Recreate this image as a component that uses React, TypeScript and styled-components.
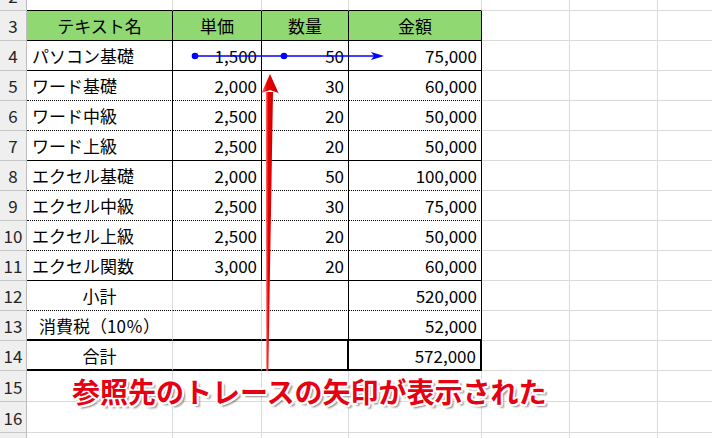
import React from "react";
import styled, { createGlobalStyle, css } from "styled-components";

const Global = createGlobalStyle`
  html, body { margin: 0; padding: 0; background: #fff; }
  body { overflow: hidden; }
  #root { width: 712px; height: 438px; }
`;

type Line = "grid" | "solid" | "dotted" | "thick" | "none";

const COLS = [27, 146, 89, 87, 133, 88, 88, 88];
const ROW_H = [11, 30, 30, 30, 30, 30, 30, 30, 30, 30, 30, 30, 30, 31, 31, 31];

const Sheet = styled.div`
  position: relative;
  width: 712px;
  height: 438px;
  overflow: hidden;
  display: grid;
  grid-template-columns: ${COLS.map((c) => `${c}px`).join(" ")};
  grid-template-rows: ${ROW_H.map((r) => `${r}px`).join(" ")} 30px;
  font-family: "Noto Sans CJK JP", "Noto Sans", sans-serif;
  font-size: 17px;
  color: #000;
  background: #fff;
`;

const lineCss = (l: Line) => {
  switch (l) {
    case "solid":
      return "1px solid #000";
    case "dotted":
      return "1px dotted #000";
    case "thick":
      return "2px solid #000";
    case "none":
      return "0";
    default:
      return "1px solid #dadada";
  }
};

const Cell = styled.div<{
  $right: Line;
  $bottom: Line;
  $align: "left" | "center" | "right";
  $bg?: string;
}>`
  box-sizing: border-box;
  display: flex;
  align-items: center;
  overflow: hidden;
  white-space: nowrap;
  line-height: 1;
  border-right: ${(p) => lineCss(p.$right)};
  border-bottom: ${(p) => lineCss(p.$bottom)};
  background: ${(p) => p.$bg ?? "transparent"};
  ${(p) =>
    p.$align === "left"
      ? css`
          justify-content: flex-start;
          padding-left: 5px;
        `
      : p.$align === "right"
      ? css`
          justify-content: flex-end;
          padding-right: 4px;
        `
      : css`
          justify-content: center;
        `}
`;

const RowHead = styled.div`
  box-sizing: border-box;
  display: flex;
  align-items: flex-end;
  justify-content: center;
  overflow: hidden;
  background: #efefef;
  border-right: 1px solid #bdbdbd;
  border-bottom: 1px solid #c6c6c6;
  color: #262626;
  font-size: 17px;
`;

const RowNum = styled.span`
  display: block;
  height: 29px;
  line-height: 29px;
  flex-shrink: 0;
`;

const Overlay = styled.svg`
  position: absolute;
  left: 0;
  top: 0;
  width: 712px;
  height: 438px;
  pointer-events: none;
`;

const Caption = styled.div`
  position: absolute;
  left: 72px;
  top: 377px;
  font-family: "Noto Sans CJK JP", sans-serif;
  font-weight: 700;
  font-size: 28px;
  line-height: 28px;
  color: #e60012;
  white-space: nowrap;
  pointer-events: none;
  text-shadow: 2px 0 0 #fff, -2px 0 0 #fff, 0 2px 0 #fff, 0 -2px 0 #fff,
    1.5px 1.5px 0 #fff, -1.5px 1.5px 0 #fff, 1.5px -1.5px 0 #fff,
    -1.5px -1.5px 0 #fff, 3px 3px 2px rgba(0, 0, 0, 0.45);
`;

type CellDef = {
  text?: string;
  align: "left" | "center" | "right";
  right: Line;
  bottom: Line;
  bg?: string;
};

const data: [string, string, string, string, Line][] = [
  ["パソコン基礎", "1,500", "50", "75,000", "solid"],
  ["ワード基礎", "2,000", "30", "60,000", "dotted"],
  ["ワード中級", "2,500", "20", "50,000", "dotted"],
  ["ワード上級", "2,500", "20", "50,000", "solid"],
  ["エクセル基礎", "2,000", "50", "100,000", "dotted"],
  ["エクセル中級", "2,500", "30", "75,000", "dotted"],
  ["エクセル上級", "2,500", "20", "50,000", "dotted"],
  ["エクセル関数", "3,000", "20", "60,000", "solid"],
];

const blank = (n: number, bottom: Line = "grid"): CellDef[] =>
  Array.from({ length: n }, () => ({ align: "left" as const, right: "grid" as Line, bottom }));

const GREEN = "#8fd872";

const rows: { n: number; cells: CellDef[] }[] = [
  {
    n: 2,
    cells: [
      { align: "left", right: "grid", bottom: "solid" },
      { align: "left", right: "grid", bottom: "solid" },
      { align: "left", right: "grid", bottom: "solid" },
      { align: "left", right: "grid", bottom: "solid" },
      ...blank(3),
    ],
  },
  {
    n: 3,
    cells: [
      { text: "テキスト名", align: "center", right: "solid", bottom: "solid", bg: GREEN },
      { text: "単価", align: "center", right: "solid", bottom: "solid", bg: GREEN },
      { text: "数量", align: "center", right: "solid", bottom: "solid", bg: GREEN },
      { text: "金額", align: "center", right: "solid", bottom: "solid", bg: GREEN },
      ...blank(3),
    ],
  },
  ...data.map(([a, b, c, d, bottom], i) => ({
    n: 4 + i,
    cells: [
      { text: a, align: "left" as const, right: "solid" as Line, bottom },
      { text: b, align: "right" as const, right: "solid" as Line, bottom },
      { text: c, align: "right" as const, right: "solid" as Line, bottom },
      { text: d, align: "right" as const, right: "solid" as Line, bottom },
      ...blank(3),
    ],
  })),
  {
    n: 12,
    cells: [
      { text: "小計", align: "center", right: "grid", bottom: "dotted" },
      { align: "left", right: "grid", bottom: "dotted" },
      { align: "left", right: "solid", bottom: "dotted" },
      { text: "520,000", align: "right", right: "solid", bottom: "dotted" },
      ...blank(3),
    ],
  },
  {
    n: 13,
    cells: [
      { text: "消費税（10％）", align: "center", right: "grid", bottom: "thick" },
      { align: "left", right: "grid", bottom: "thick" },
      { align: "left", right: "solid", bottom: "thick" },
      { text: "52,000", align: "right", right: "solid", bottom: "thick" },
      ...blank(3),
    ],
  },
  {
    n: 14,
    cells: [
      { text: "合計", align: "center", right: "grid", bottom: "thick" },
      { align: "left", right: "grid", bottom: "thick" },
      { align: "left", right: "thick", bottom: "thick" },
      { text: "572,000", align: "right", right: "thick", bottom: "thick" },
      ...blank(3),
    ],
  },
  { n: 15, cells: blank(7) },
  { n: 16, cells: blank(7) },
  { n: 17, cells: blank(7) },
];

export default function App() {
  return (
    <>
      <Global />
      <Sheet>
        {rows.map((r) => (
          <React.Fragment key={r.n}>
            <RowHead>
              <RowNum>{r.n}</RowNum>
            </RowHead>
            {r.cells.map((c, i) => (
              <Cell
                key={i}
                $right={c.right}
                $bottom={c.bottom}
                $align={c.align}
                $bg={c.bg}
              >
                {c.text}
              </Cell>
            ))}
          </React.Fragment>
        ))}
        <Overlay viewBox="0 0 712 438">
          <defs>
            <linearGradient id="redShaft" x1="0" y1="0" x2="1" y2="0">
              <stop offset="0" stopColor="#ff8080" />
              <stop offset="0.35" stopColor="#ee0000" />
              <stop offset="1" stopColor="#c80000" />
            </linearGradient>
          </defs>
          <line x1="195" y1="56" x2="377" y2="56" stroke="#0000ff" strokeWidth="1.5" />
          <circle cx="195" cy="56" r="3.3" fill="#0000ff" />
          <circle cx="284" cy="56" r="3.3" fill="#0000ff" />
          <polygon points="371,52 384,56 371,60 374,56" fill="#0000ff" />
          <polygon
            points="265.8,92 273,92 268.3,371 266.3,371"
            fill="url(#redShaft)"
          />
          <polygon points="261.5,93 270,74 278.5,93 270,90" fill="url(#redShaft)" />
        </Overlay>
        <Caption>参照先のトレースの矢印が表示された</Caption>
      </Sheet>
    </>
  );
}
